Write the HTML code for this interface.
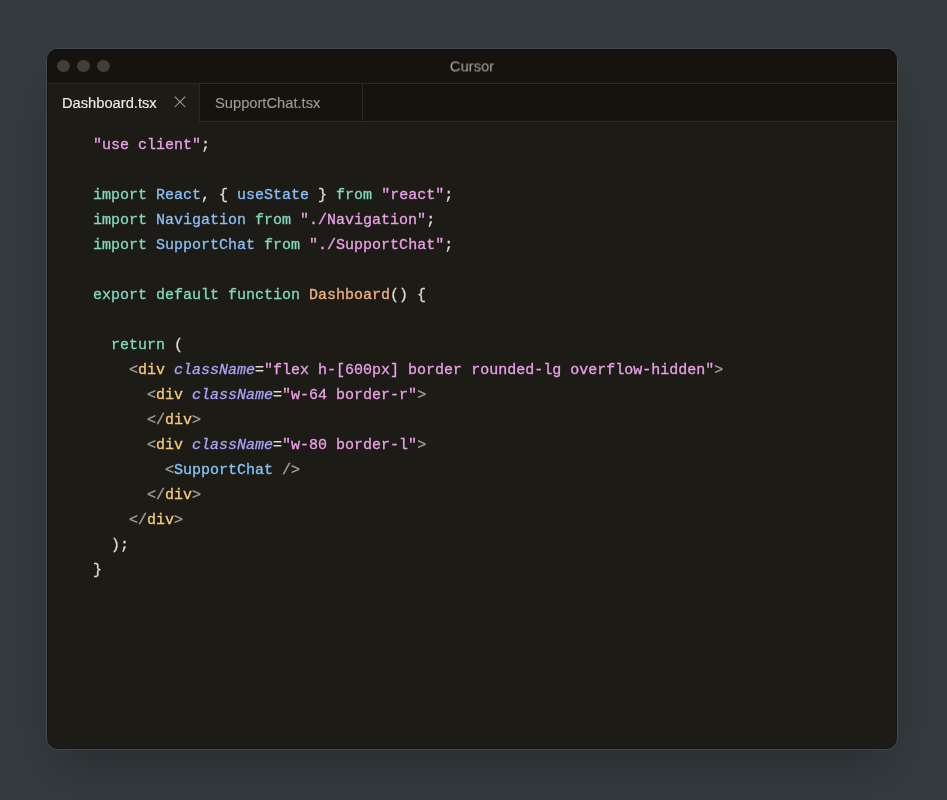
<!DOCTYPE html>
<html><head><meta charset="utf-8">
<style>
html,body{margin:0;padding:0;}
body{width:947px;height:800px;overflow:hidden;background:#343b3e;position:relative;font-family:"Liberation Sans",sans-serif;}
.win{position:absolute;left:46px;top:48px;width:850px;height:700px;border:1px solid #424b4f;border-radius:12px;background:#1c1b16;overflow:hidden;box-shadow:0 25px 50px -12px rgba(0,0,0,0.25);}
.title{position:absolute;left:0;top:0;width:850px;height:34px;background:#16130e;border-bottom:1px solid #2a2924;}
.dot{position:absolute;top:10.8px;width:12.8px;height:12.2px;border-radius:50%;background:#403e3a;}
.ttl{position:absolute;left:0;top:1px;width:850px;height:34px;line-height:34px;text-align:center;color:#a9a8a2;font-size:15.5px;will-change:transform;transform:translateY(-0.6px) scaleX(0.955);}
.tabs{position:absolute;left:0;top:35px;width:850px;height:37px;background:#16130e;border-bottom:1px solid #2a2924;}
.tab{position:absolute;top:0;height:38px;border-right:1px solid #2a2924;font-size:14.7px;line-height:37px;}
.t1{left:0;width:152px;background:#1c1b16;color:#ecebe6;}
.t2{left:153px;width:162px;background:#16130e;color:#9c9a95;height:37px;}
.tab span{position:absolute;left:15px;top:1px;will-change:transform;-webkit-text-stroke:0.15px currentColor;}
.ov{position:absolute;left:0;top:0;width:850px;height:700px;border-radius:11px;box-shadow:inset 0 0 0 1px rgba(0,0,0,0.22);pointer-events:none;}
.code{position:absolute;left:46px;top:84px;font-family:"Liberation Mono",monospace;font-size:15px;line-height:25px;white-space:pre;color:#e0d9c8;will-change:transform;-webkit-text-stroke:0.3px currentColor;}
.k{color:#80d8c2}.s{color:#eaa0e6}.i{color:#8cbef6}.p{color:#dedbd0}.f{color:#f0b080}.t{color:#f6cc78}.a{color:#aaa2f6;font-style:italic}.g{color:#a0a09c}.c{color:#84c4f6}
</style></head><body>
<div class="win">
  <div class="title">
    <div class="dot" style="left:10px"></div>
    <div class="dot" style="left:30px"></div>
    <div class="dot" style="left:50px"></div>
    <div class="ttl">Cursor</div>
  </div>
  <div class="tabs">
    <div class="tab t1"><span>Dashboard.tsx</span>
      <svg style="position:absolute;left:127px;top:12px" width="12" height="12" viewBox="0 0 12 12"><path d="M0.8 0.6L11.2 11M11.2 0.6L0.8 11" stroke="#a3a29d" stroke-width="1.05" fill="none"/></svg>
    </div>
    <div class="tab t2"><span>SupportChat.tsx</span></div>
  </div>
<div class="code"><span class="s">"use client"</span><span class="p">;</span>

<span class="k">import</span> <span class="i">React</span><span class="p">, { </span><span class="i">useState</span><span class="p"> } </span><span class="k">from</span> <span class="s">"react"</span><span class="p">;</span>
<span class="k">import</span> <span class="i">Navigation</span> <span class="k">from</span> <span class="s">"./Navigation"</span><span class="p">;</span>
<span class="k">import</span> <span class="i">SupportChat</span> <span class="k">from</span> <span class="s">"./SupportChat"</span><span class="p">;</span>

<span class="k">export</span> <span class="k">default</span> <span class="k">function</span> <span class="f">Dashboard</span><span class="p">() {</span>

  <span class="k">return</span> <span class="p">(</span>
    <span class="g">&lt;</span><span class="t">div</span> <span class="a">className</span><span class="p">=</span><span class="s">"flex h-[600px] border rounded-lg overflow-hidden"</span><span class="g">&gt;</span>
      <span class="g">&lt;</span><span class="t">div</span> <span class="a">className</span><span class="p">=</span><span class="s">"w-64 border-r"</span><span class="g">&gt;</span>
      <span class="g">&lt;/</span><span class="t">div</span><span class="g">&gt;</span>
      <span class="g">&lt;</span><span class="t">div</span> <span class="a">className</span><span class="p">=</span><span class="s">"w-80 border-l"</span><span class="g">&gt;</span>
        <span class="g">&lt;</span><span class="c">SupportChat</span> <span class="g">/&gt;</span>
      <span class="g">&lt;/</span><span class="t">div</span><span class="g">&gt;</span>
    <span class="g">&lt;/</span><span class="t">div</span><span class="g">&gt;</span>
  <span class="p">);</span>
<span class="p">}</span>
</div>
<div class="ov"></div>
</div>
</body></html>
